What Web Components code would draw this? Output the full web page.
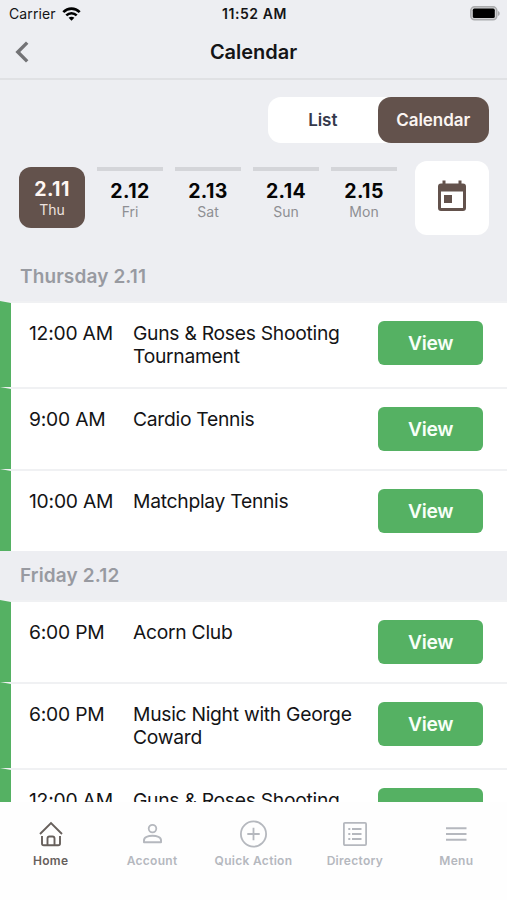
<!DOCTYPE html>
<html lang="en">
<head>
<meta charset="utf-8">
<meta name="viewport" content="width=device-width, initial-scale=1">
<title>Calendar</title>
<style>
  body {
    margin: 0;
    height: 900px;
    overflow: hidden;
    background: #edeef2;
    font-family: Inter, "Liberation Sans", sans-serif;
    color: #141416;
  }
</style>
</head>
<body>
<calendar-app></calendar-app>

<script>
// Status bar: carrier, time, battery
class StatusBar extends HTMLElement {
  constructor() {
    super();
    this.attachShadow({ mode: 'open' });
    this.shadowRoot.innerHTML = `
      <style>
        :host {
          display: grid;
          grid-template-columns: 1fr auto 1fr;
          align-items: center;
          height: 27px;
          padding: 0 7px 0 9px;
          font-size: 14px;
        }
        .carrier { display: flex; align-items: center; gap: 6px; letter-spacing: 0.1px; }
        .time { font-weight: 600; letter-spacing: 0.55px; }
        .battery { justify-self: end; }
        svg { display: block; }
      </style>
      <div class="carrier">
        <slot name="carrier"></slot>
        <svg width="19" height="14" viewBox="0 0 19 14" fill="none" stroke="#000" stroke-width="2.6">
          <path d="M1.3 5.2C6 .4 13 .4 17.7 5.2"/>
          <path d="M4.3 8.4c3-2.9 7.4-2.9 10.4 0"/>
          <path d="M9.5 13.7 6.6 10.8c1.7-1.5 4.1-1.5 5.8 0z" fill="#000" stroke="none"/>
        </svg>
      </div>
      <div class="time"><slot name="time"></slot></div>
      <svg class="battery" width="30" height="15" viewBox="0 0 30 15">
        <rect x=".8" y=".8" width="26" height="13" rx="3.8" fill="#d2d2d4" stroke="#aaabad" stroke-width="1.5"/>
        <rect x="2.8" y="2.6" width="22" height="9.4" rx="1.6" fill="#000"/>
        <path d="M28 5c2.3.8 2.3 4.2 0 5z" fill="#aaabad"/>
      </svg>
    `;
  }
}
customElements.define('status-bar', StatusBar);

class NavHeader extends HTMLElement {
  constructor() {
    super();
    this.attachShadow({ mode: 'open' });
    this.shadowRoot.innerHTML = `
      <style>
        :host {
          display: grid;
          grid-template-columns: 1fr auto 1fr;
          align-items: center;
          box-sizing: border-box;
          height: 53px;
          padding: 0 15px 2px;
          border-bottom: 2px solid #e0e1e4;
        }
        .title { font-size: 20px; font-weight: 600; letter-spacing: -0.03px; }
        svg { display: block; }
      </style>
      <svg width="14" height="22" viewBox="0 0 14 22" fill="none" stroke="#737376" stroke-width="3.4">
        <path d="M12.2 1.6 2.8 11l9.4 9.4"/>
      </svg>
      <div class="title"><slot></slot></div>
    `;
  }
}
customElements.define('nav-header', NavHeader);

class ViewToggle extends HTMLElement {
  constructor() {
    super();
    this.attachShadow({ mode: 'open' });
    this.shadowRoot.innerHTML = `
      <style>
        :host {
          display: flex;
          width: 221px;
          height: 46px;
          border-radius: 13px;
          background: #fff;
        }
        div {
          flex: 1;
          display: flex;
          align-items: center;
          justify-content: center;
          box-sizing: border-box;
          padding-bottom: 1px;
          border-radius: 13px;
          font-size: 17px;
          font-weight: 600;
          letter-spacing: -0.05px;
          color: #35394b;
        }
        .active { background: #63524c; color: #fbf5f2; }
      </style>
      <div>List</div>
      <div class="active">Calendar</div>
    `;
  }
}
customElements.define('view-toggle', ViewToggle);

class DayTab extends HTMLElement {
  constructor() {
    super();
    this.attachShadow({ mode: 'open' });
    this.shadowRoot.innerHTML = `
      <style>
        :host {
          display: flex;
          flex-direction: column;
          align-items: center;
          box-sizing: border-box;
          width: 66px;
          height: 61px;
          padding-top: 9px;
          border-top: 4px solid #d4d5d9;
        }
        :host([active]) {
          padding-top: 11px;
          border-top: 0;
          border-radius: 12px;
          background: #63524c;
        }
        .date {
          font-size: 19.5px;
          line-height: 22px;
          font-weight: 700;
          letter-spacing: 0.4px;
          color: #050505;
        }
        .day { font-size: 14px; line-height: 20px; color: #8e8f93; }
        :host([active]) .date { color: #fff6f2; }
        :host([active]) .day { color: #eee2de; }
      </style>
      <div class="date">${this.getAttribute('date')}</div>
      <div class="day">${this.getAttribute('day')}</div>
    `;
  }
}
customElements.define('day-tab', DayTab);

class DayStrip extends HTMLElement {
  constructor() {
    super();
    this.attachShadow({ mode: 'open' });
    this.shadowRoot.innerHTML = `
      <style>
        :host { display: flex; justify-content: space-between; align-items: flex-start; }
        .days { display: flex; gap: 12px; padding-top: 6px; }
        .picker {
          display: flex;
          align-items: center;
          justify-content: center;
          box-sizing: border-box;
          width: 74px;
          height: 74px;
          padding-bottom: 4px;
          border-radius: 12px;
          background: #fff;
        }
      </style>
      <div class="days"><slot></slot></div>
      <div class="picker">
        <svg width="30" height="32" viewBox="0 0 30 32" fill="#63524c">
          <path fill-rule="evenodd" d="M4 3.5h22a3 3 0 0 1 3 3V28a3 3 0 0 1-3 3H4a3 3 0 0 1-3-3V6.5a3 3 0 0 1 3-3zM4 11.500V28h22V11.500z"/>
          <path d="M5.500 .5h3v4h-3zM21.500 .5h3v4h-3zM7 15h8v8H7z"/>
        </svg>
      </div>
    `;
  }
}
customElements.define('day-strip', DayStrip);

class DayHeading extends HTMLElement {
  constructor() {
    super();
    this.attachShadow({ mode: 'open' });
    this.shadowRoot.innerHTML = `
      <style>
        :host {
          display: flex;
          align-items: center;
          height: 49px;
          padding-left: 20px;
          font-size: 19px;
          font-weight: 600;
          letter-spacing: 0.13px;
          color: #989aa1;
        }
      </style>
      <slot></slot>
    `;
  }
}
customElements.define('day-heading', DayHeading);

class EventRow extends HTMLElement {
  constructor() {
    super();
    this.attachShadow({ mode: 'open' });
    this.shadowRoot.innerHTML = `
      <style>
        :host {
          display: grid;
          grid-template-columns: 104px 1fr 105px;
          align-items: start;
          flex-shrink: 0;
          padding: 0 24px 0 18px;
          border-left: 11px solid #55b163;
          border-top: 2px solid #f0f1f3;
          background: #fff;
          font-size: 19.3px;
          line-height: 23px;
        }
        .time, .name { padding: 19px 0; }
        .time { letter-spacing: -0.22px; }
        .name { letter-spacing: -0.28px; white-space: pre-line; }
        .view {
          display: flex;
          align-items: center;
          justify-content: center;
          height: 44px;
          margin: 18px 0;
          border-radius: 6px;
          background: #55b163;
          color: #f7fff8;
          font-weight: 600;
          letter-spacing: -0.3px;
        }
      </style>
      <div class="time">${this.getAttribute('time')}</div>
      <div class="name"><slot></slot></div>
      <div class="view">View</div>
    `;
  }
}
customElements.define('event-row', EventRow);

const TAB_ICONS = {
  home: '<path d="M3 14 14 3l11 11" stroke-width="1.9"/><path d="M5 16v7.500a1.800 1.800 0 0 0 1.800 1.800h14.400a1.800 1.800 0 0 0 1.800-1.800V16M10.500 25v-6.500a2 2 0 0 1 2-2h3a2 2 0 0 1 2 2V25" stroke-width="1.9"/>',
  account: '<circle cx="14.500" cy="8.600" r="3.800"/><path d="M6 22.200v-2c0-6 17-6 17 0v2z" stroke-linejoin="round" stroke-width="2"/>',
  action: '<circle cx="14.500" cy="14" r="12.600"/><path d="M14.500 7.800v12.400M8.300 14h12.400"/>',
  directory: '<rect x="2.900" y="2.900" width="22.200" height="22.200" rx="1"/><path d="M11 9h9.500M11 14h9.500M11 19h9.500M7.300 9h2M7.300 14h2M7.300 19h2"/>',
  menu: '<path d="M4 8.200h20.500M4 14h20.500M4 19.800h20.500" stroke-width="2"/>'
};

class TabItem extends HTMLElement {
  constructor() {
    super();
    this.attachShadow({ mode: 'open' });
    this.shadowRoot.innerHTML = `
      <style>
        :host {
          display: flex;
          flex-direction: column;
          align-items: center;
          gap: 4px;
          color: #b5b8be;
          font-size: 12px;
          line-height: 17px;
          font-weight: 600;
          letter-spacing: 0.3px;
          white-space: nowrap;
        }
        :host([active]) { color: #67605c; }
        svg { display: block; overflow: visible; }
      </style>
      <svg width="28" height="28" viewBox="0 0 28 28" fill="none" stroke="currentColor" stroke-width="1.8">
        ${TAB_ICONS[this.getAttribute('icon')]}
      </svg>
      <slot></slot>
    `;
  }
}
customElements.define('tab-item', TabItem);

class TabBar extends HTMLElement {
  constructor() {
    super();
    this.attachShadow({ mode: 'open' });
    this.shadowRoot.innerHTML = `
      <style>
        :host {
          display: grid;
          grid-template-columns: repeat(5, 1fr);
          align-items: start;
          box-sizing: border-box;
          flex: 0 0 98px;
          padding-top: 18px;
          background: #fefefe;
        }
      </style>
      <slot></slot>
    `;
  }
}
customElements.define('tab-bar', TabBar);

class CalendarApp extends HTMLElement {
  constructor() {
    super();
    this.attachShadow({ mode: 'open' });
    this.shadowRoot.innerHTML = `
      <style>
        :host { display: flex; flex-direction: column; height: 900px; }
        .filters {
          display: flex;
          flex-direction: column;
          gap: 18px;
          padding: 17px 18.500px 17px 19px;
        }
        view-toggle { align-self: flex-end; }
        .events {
          display: flex;
          flex-direction: column;
          flex: 1;
          min-height: 0;
          overflow: hidden;
        }
        day-heading { flex-shrink: 0; }
      </style>
      <status-bar><span slot="carrier">Carrier</span><span slot="time">11:52 AM</span></status-bar>
      <nav-header>Calendar</nav-header>
      <div class="filters">
        <view-toggle></view-toggle>
        <day-strip>
          <day-tab date="2.11" day="Thu" active></day-tab>
          <day-tab date="2.12" day="Fri"></day-tab>
          <day-tab date="2.13" day="Sat"></day-tab>
          <day-tab date="2.14" day="Sun"></day-tab>
          <day-tab date="2.15" day="Mon"></day-tab>
        </day-strip>
      </div>
      <div class="events">
        <day-heading>Thursday 2.11</day-heading>
        <event-row time="12:00 AM">Guns &amp; Roses Shooting\nTournament</event-row>
        <event-row time="9:00 AM">Cardio Tennis</event-row>
        <event-row time="10:00 AM">Matchplay Tennis</event-row>
        <day-heading>Friday 2.12</day-heading>
        <event-row time="6:00 PM">Acorn Club</event-row>
        <event-row time="6:00 PM">Music Night with George\nCoward</event-row>
        <event-row time="12:00 AM">Guns &amp; Roses Shooting\nTournament</event-row>
      </div>
      <tab-bar>
        <tab-item icon="home" active>Home</tab-item>
        <tab-item icon="account">Account</tab-item>
        <tab-item icon="action">Quick Action</tab-item>
        <tab-item icon="directory">Directory</tab-item>
        <tab-item icon="menu">Menu</tab-item>
      </tab-bar>
    `;
  }
}
customElements.define('calendar-app', CalendarApp);
</script>
</body>
</html>
